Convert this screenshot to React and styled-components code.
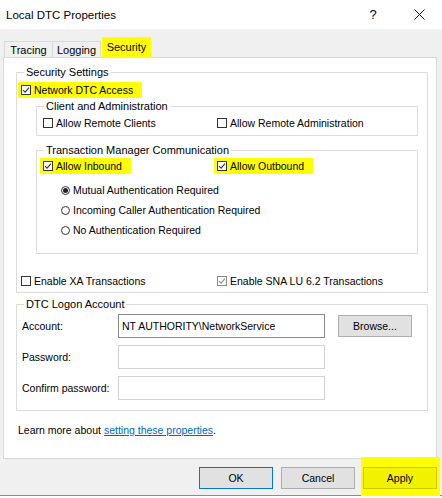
import React from "react";
import styled, { createGlobalStyle } from "styled-components";

const GlobalStyle = createGlobalStyle`
  html, body {
    margin: 0;
    padding: 0;
    background: #ffffff;
  }
  body {
    font-family: "Liberation Sans", Arial, sans-serif;
    font-size: 10.5px;
    color: #000;
  }
  * {
    box-sizing: border-box;
  }
`;

const Window = styled.div`
  width: 442px;
  height: 496px;
  background: #f0f0f0;
  border-bottom: 1px solid #8c8c8c;
  display: flex;
  flex-direction: column;
`;

const TitleBar = styled.div`
  height: 29px;
  background: #ffffff;
  display: flex;
  align-items: center;
  padding-left: 6px;
  font-size: 11.5px;
`;

const Title = styled.div`
  flex: 1;
`;

const TitleButton = styled.div`
  width: ${(p) => p.$w}px;
  height: 29px;
  display: flex;
  align-items: center;
  justify-content: center;
  font-size: 13px;
`;

const TabStrip = styled.div`
  height: 28px;
  display: flex;
  align-items: flex-end;
  padding-left: 4px;
  position: relative;
  z-index: 1;
`;

const Tab = styled.div`
  width: ${(p) => p.$w}px;
  height: ${(p) => (p.$active ? 21 : 16)}px;
  margin-left: ${(p) => p.$ml || 0}px;
  display: flex;
  align-items: center;
  justify-content: center;
  padding-bottom: ${(p) => (p.$active ? 3 : 0)}px;
  background: ${(p) => (p.$active ? "#ffff00" : "#f0f0f0")};
  border: 1px solid ${(p) => (p.$active ? "#ffff00" : "#d9d9d9")};
  border-bottom: none;
  margin-bottom: ${(p) => (p.$active ? -1 : 0)}px;
  font-size: 11px;
`;

const Panel = styled.div`
  margin-left: 3px;
  width: 434px;
  height: 402px;
  background: #ffffff;
  border: 1px solid #d9d9d9;
  padding: 14px 8px 0 12px;
  display: flex;
  flex-direction: column;
`;

const Group = styled.div`
  position: relative;
  border: 1px solid #dcdcdc;
  margin: ${(p) => p.$m || "0"};
  padding: ${(p) => p.$p || "0"};
  height: ${(p) => (p.$h ? `${p.$h}px` : "auto")};
`;

const Legend = styled.span`
  position: absolute;
  top: -8px;
  left: 7px;
  padding: 0 2px;
  background: #ffffff;
  line-height: 14px;
  font-size: 11px;
`;

const Row = styled.div`
  display: flex;
  align-items: center;
  height: ${(p) => p.$h || 16}px;
  margin-top: ${(p) => p.$mt || 0}px;
  padding-left: ${(p) => p.$pl || 0}px;
`;

const Cell = styled.div`
  width: ${(p) => (p.$w ? `${p.$w}px` : "auto")};
  display: flex;
  align-items: center;
`;

const Mark = styled.span`
  display: inline-flex;
  align-items: center;
  gap: 3px;
  background: ${(p) => (p.$on ? "#ffff00" : "transparent")};
  height: 16px;
  padding: 0 ${(p) => (p.$on ? "9px" : "0")} 0 ${(p) => (p.$on ? "3px" : "0")};
  margin-left: ${(p) => (p.$on ? "-3px" : "0")};
`;

const Box = styled.span`
  width: 10px;
  height: 10px;
  border: 1px solid ${(p) => (p.$dim ? "#8a8a8a" : "#333333")};
  background: #ffffff;
  display: inline-flex;
  align-items: center;
  justify-content: center;
`;

const Dot = styled.span`
  width: 9px;
  height: 9px;
  border-radius: 50%;
  border: 1px solid #333333;
  background: #ffffff;
  display: inline-flex;
  align-items: center;
  justify-content: center;
  margin-right: 3px;
  &::after {
    content: "";
    width: 5px;
    height: 5px;
    border-radius: 50%;
    background: ${(p) => (p.$on ? "#222222" : "transparent")};
  }
`;

const RadioList = styled.div`
  padding-left: 18px;
  margin-top: 6px;
`;

const Check = ({ checked, dim, label, hi }) => (
  <Mark $on={hi}>
    <Box $dim={dim}>
      {checked && (
        <svg width="8" height="8" viewBox="0 0 8 8">
          <path
            d="M1 4.2 L3.1 6.2 L7 1.6"
            fill="none"
            stroke={dim ? "#8a8a8a" : "#333"}
            strokeWidth="1.1"
          />
        </svg>
      )}
    </Box>
    {label}
  </Mark>
);

const Radio = ({ on, label }) => (
  <Row $h={20}>
    <Dot $on={on} />
    {label}
  </Row>
);

const FieldRow = styled.div`
  display: flex;
  align-items: center;
  margin-top: ${(p) => p.$mt || 0}px;
`;

const Label = styled.div`
  width: 96px;
`;

const Input = styled.div`
  width: 207px;
  height: 24px;
  border: 1px solid ${(p) => (p.$off ? "#d2d2d2" : "#8a8a8a")};
  background: #ffffff;
  display: flex;
  align-items: center;
  padding-left: 3px;
`;

const Button = styled.div`
  position: relative;
  width: ${(p) => p.$w || 74}px;
  height: 22px;
  margin-left: ${(p) => p.$ml || 0}px;
  display: flex;
  align-items: center;
  justify-content: center;
  background: ${(p) => (p.$hi ? "#f2f200" : "#e1e1e1")};
  border: 1px solid ${(p) => (p.$primary ? "#0078d7" : p.$hi ? "#c9c900" : "#adadad")};
  ${(p) =>
    p.$hi &&
    `
    &::before {
      content: "";
      position: absolute;
      top: -11px;
      left: -3px;
      right: -4px;
      bottom: -11px;
      background: #ffff00;
      z-index: -1;
    }
  `}
`;

const Hint = styled.div`
  margin-top: 11px;
  margin-left: 2px;
  height: 16px;
  display: flex;
  align-items: center;
`;

const Link = styled.span`
  color: #0066cc;
  text-decoration: underline;
  margin-left: 3px;
`;

const Footer = styled.div`
  flex: 1;
  display: flex;
  justify-content: flex-end;
  align-items: flex-start;
  padding: 8px 5px 0 0;
  position: relative;
  z-index: 0;
`;

const Close = () => (
  <svg width="11" height="11" viewBox="0 0 11 11">
    <path d="M0.5 0.5 L10.5 10.5 M10.5 0.5 L0.5 10.5" stroke="#111" strokeWidth="1" />
  </svg>
);

export default function App() {
  return (
    <>
      <GlobalStyle />
      <Window>
        <TitleBar>
          <Title>Local DTC Properties</Title>
          <TitleButton $w={46}>?</TitleButton>
          <TitleButton $w={46}>
            <Close />
          </TitleButton>
        </TitleBar>
        <TabStrip>
          <Tab $w={49}>Tracing</Tab>
          <Tab $w={49} $ml={-1}>Logging</Tab>
          <Tab $w={49} $ml={1} $active>Security</Tab>
        </TabStrip>
        <Panel>
          <Group $p="0 0 3px 0">
            <Legend>Security Settings</Legend>
            <Row $mt={9} $pl={4}>
              <Check checked hi label="Network DTC Access" />
            </Row>
            <Group $m="8px 9px 0 19px" $p="8px 0 0 6px" $h={30}>
              <Legend>Client and Administration</Legend>
              <Row>
                <Cell $w={174}>
                  <Check label="Allow Remote Clients" />
                </Cell>
                <Cell>
                  <Check label="Allow Remote Administration" />
                </Cell>
              </Row>
            </Group>
            <Group $m="14px 9px 0 19px" $p="7px 0 0 6px" $h={104}>
              <Legend>Transaction Manager Communication</Legend>
              <Row>
                <Cell $w={174}>
                  <Check checked hi label="Allow Inbound" />
                </Cell>
                <Cell>
                  <Check checked hi label="Allow Outbound" />
                </Cell>
              </Row>
              <RadioList>
                <Radio on label="Mutual Authentication Required" />
                <Radio label="Incoming Caller Authentication Required" />
                <Radio label="No Authentication Required" />
              </RadioList>
            </Group>
            <Row $mt={19} $pl={4}>
              <Cell $w={196}>
                <Check label="Enable XA Transactions" />
              </Cell>
              <Cell>
                <Check checked dim label="Enable SNA LU 6.2 Transactions" />
              </Cell>
            </Row>
          </Group>
          <Group $m="11px 0 0 0" $p="9px 0 10px 5px">
            <Legend>DTC Logon Account</Legend>
            <FieldRow>
              <Label>Account:</Label>
              <Input>NT AUTHORITY\NetworkService</Input>
              <Button $ml={13}>Browse...</Button>
            </FieldRow>
            <FieldRow $mt={7}>
              <Label>Password:</Label>
              <Input $off />
            </FieldRow>
            <FieldRow $mt={7}>
              <Label>Confirm password:</Label>
              <Input $off />
            </FieldRow>
          </Group>
          <Hint>
            Learn more about<Link>setting these properties</Link>.
          </Hint>
        </Panel>
        <Footer>
          <Button $primary>OK</Button>
          <Button $ml={8}>Cancel</Button>
          <Button $ml={8} $hi>Apply</Button>
        </Footer>
      </Window>
    </>
  );
}
